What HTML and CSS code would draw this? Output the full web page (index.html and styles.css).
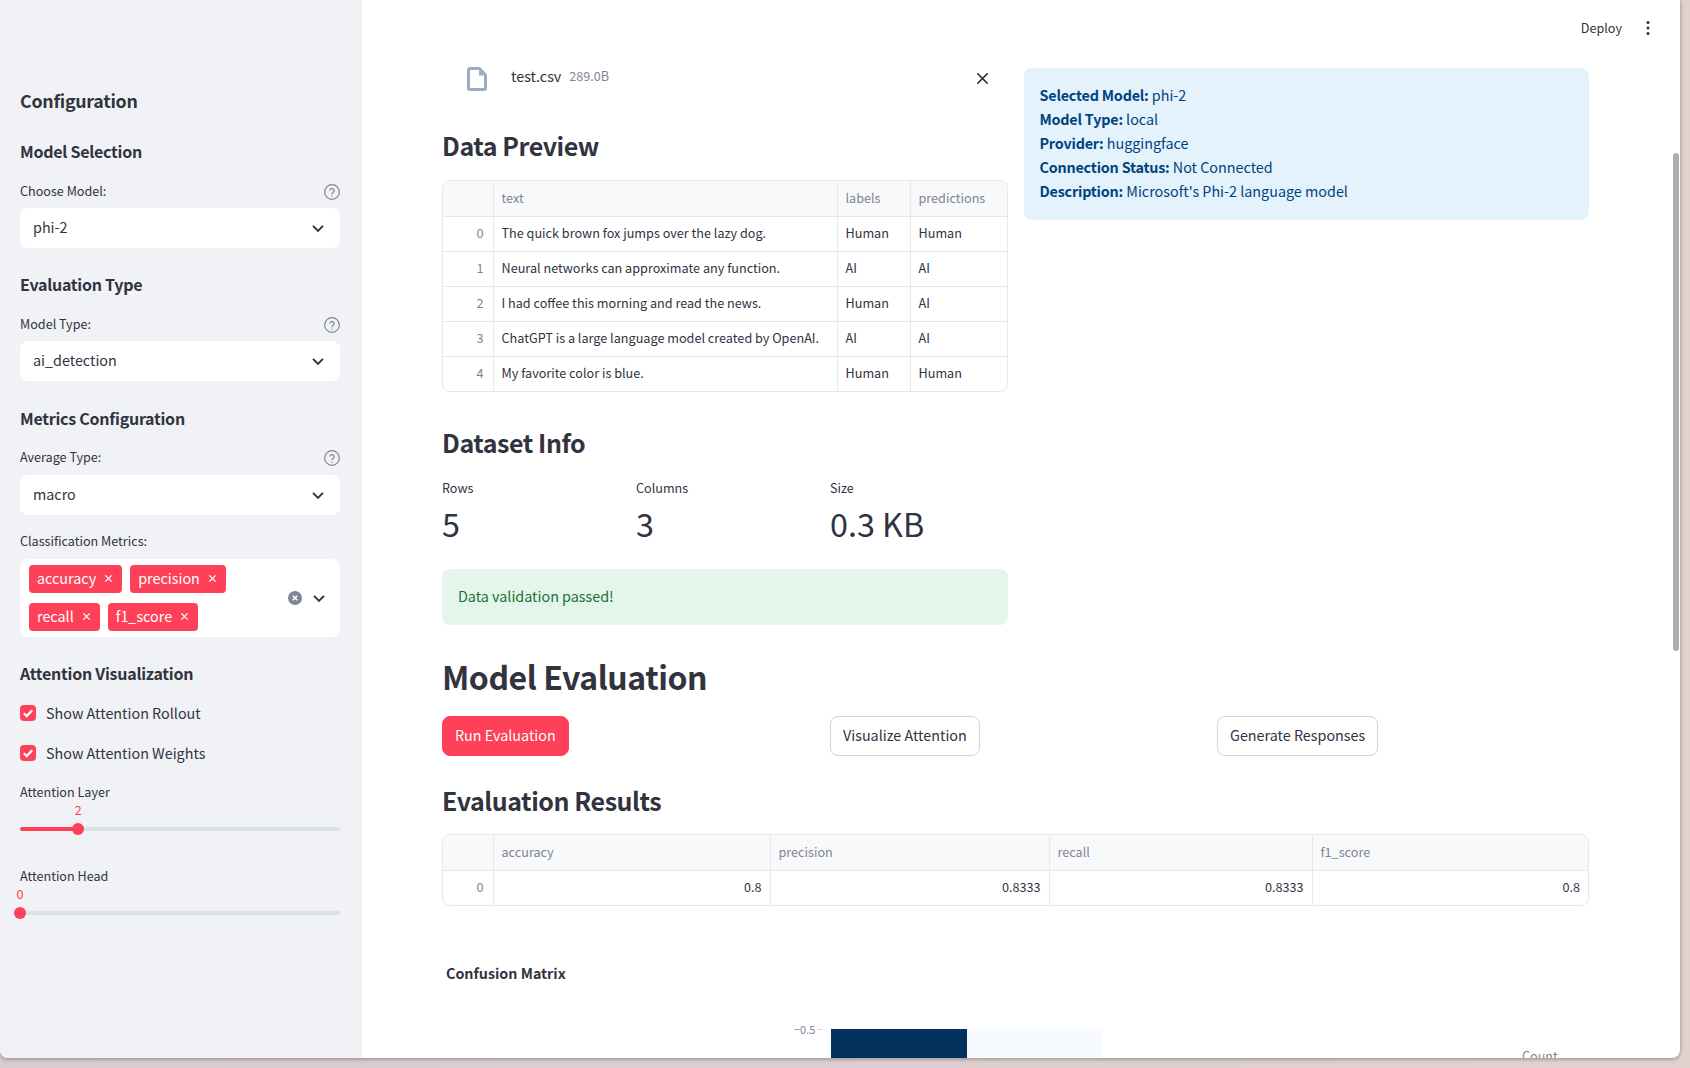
FILE: index.html
```html
<!DOCTYPE html>
<html lang="en">
<head>
    <meta charset="UTF-8">
    <meta name="viewport" content="width=device-width, initial-scale=1.0">
    <title>Model Evaluation</title>
    <link rel="stylesheet" href="styles.css">
</head>
<body>
    <div class="window">
        <aside class="sidebar">
            <h2 class="side-title">Configuration</h2>

            <h3 class="side-head first">Model Selection</h3>
            <div class="field-label"><span>Choose Model:</span>
                <svg class="help" viewBox="0 0 24 24"><circle cx="12" cy="12" r="11"/><path d="M8.800 9.200a3.300 3.300 0 0 1 6.400 1c0 2.200-3.200 2.700-3.200 4.600"/><path d="M12 18.200v.1"/></svg>
            </div>
            <div class="select"><span>phi-2</span>
                <svg class="chevron" viewBox="0 0 24 24"><path d="M6 9.500l6 6 6-6"/></svg>
            </div>

            <h3 class="side-head">Evaluation Type</h3>
            <div class="field-label"><span>Model Type:</span>
                <svg class="help" viewBox="0 0 24 24"><circle cx="12" cy="12" r="11"/><path d="M8.800 9.200a3.300 3.300 0 0 1 6.400 1c0 2.200-3.200 2.700-3.200 4.600"/><path d="M12 18.200v.1"/></svg>
            </div>
            <div class="select"><span>ai_detection</span>
                <svg class="chevron" viewBox="0 0 24 24"><path d="M6 9.500l6 6 6-6"/></svg>
            </div>

            <h3 class="side-head">Metrics Configuration</h3>
            <div class="field-label"><span>Average Type:</span>
                <svg class="help" viewBox="0 0 24 24"><circle cx="12" cy="12" r="11"/><path d="M8.800 9.200a3.300 3.300 0 0 1 6.400 1c0 2.200-3.200 2.700-3.200 4.600"/><path d="M12 18.200v.1"/></svg>
            </div>
            <div class="select"><span>macro</span>
                <svg class="chevron" viewBox="0 0 24 24"><path d="M6 9.500l6 6 6-6"/></svg>
            </div>

            <div class="field-label"><span>Classification Metrics:</span></div>
            <div class="multi">
                <div class="tags">
                    <span class="tag">accuracy <svg viewBox="0 0 10 10"><path d="M1.500 1.500l7 7M8.500 1.500l-7 7"/></svg></span>
                    <span class="tag">precision <svg viewBox="0 0 10 10"><path d="M1.500 1.500l7 7M8.500 1.500l-7 7"/></svg></span>
                    <span class="tag">recall <svg viewBox="0 0 10 10"><path d="M1.500 1.500l7 7M8.500 1.500l-7 7"/></svg></span>
                    <span class="tag">f1_score <svg viewBox="0 0 10 10"><path d="M1.500 1.500l7 7M8.500 1.500l-7 7"/></svg></span>
                </div>
                <svg class="clear" viewBox="0 0 14 14"><circle cx="7" cy="7" r="7"/><path d="M4.700 4.700l4.600 4.600M9.300 4.700l-4.600 4.600"/></svg>
                <svg class="chevron" viewBox="0 0 24 24"><path d="M6 9.500l6 6 6-6"/></svg>
            </div>

            <h3 class="side-head">Attention Visualization</h3>
            <label class="check first">
                <svg viewBox="0 0 16 16"><rect width="16" height="16" rx="4"/><path d="M3.800 8.200l2.900 2.900 5.500-5.800"/></svg>
                Show Attention Rollout
            </label>
            <label class="check">
                <svg viewBox="0 0 16 16"><rect width="16" height="16" rx="4"/><path d="M3.800 8.200l2.900 2.900 5.500-5.800"/></svg>
                Show Attention Weights
            </label>

            <div class="field-label slider-label"><span>Attention Layer</span></div>
            <div class="slider">
                <div class="track">
                    <div class="fill" style="width: 18.18%"></div>
                    <span class="slider-value" style="left: 18.18%">2</span>
                    <span class="thumb" style="left: 18.18%"></span>
                </div>
            </div>

            <div class="field-label"><span>Attention Head</span></div>
            <div class="slider">
                <div class="track">
                    <div class="fill" style="width: 0%"></div>
                    <span class="slider-value" style="left: 0%">0</span>
                    <span class="thumb" style="left: 0%"></span>
                </div>
            </div>
        </aside>

        <main class="main">
            <div class="toolbar">
                <span>Deploy</span>
                <svg viewBox="0 0 4 16"><circle cx="2" cy="2.500" r="1.500"/><circle cx="2" cy="8" r="1.500"/><circle cx="2" cy="13.500" r="1.500"/></svg>
            </div>
            <div class="scrollbar"></div>

            <div class="top-row">
                <div class="left-col">
                    <div class="file-row">
                        <svg class="file-icon" viewBox="0 0 20 24"><path d="M3 1.500h9.500l6 6.500v13a1.500 1.500 0 0 1-1.500 1.500H3A1.500 1.500 0 0 1 1.500 21V3A1.500 1.500 0 0 1 3 1.500z"/><path class="file-fold" d="M12 3v5.500h5.500z"/></svg>
                        <span class="file-name">test.csv</span>
                        <span class="file-size">289.0B</span>
                        <svg class="file-close" viewBox="0 0 14 14"><path d="M1.500 1.500l11 11M12.500 1.500l-11 11"/></svg>
                    </div>

                    <h2 class="heading preview-head">Data Preview</h2>
                    <div class="table-wrap">
                        <table class="grid">
                            <colgroup><col class="c-index"><col class="c-text"><col class="c-labels"><col></colgroup>
                            <tr><th></th><th>text</th><th>labels</th><th>predictions</th></tr>
                            <tr><td class="idx">0</td><td>The quick brown fox jumps over the lazy dog.</td><td>Human</td><td>Human</td></tr>
                            <tr><td class="idx">1</td><td>Neural networks can approximate any function.</td><td>AI</td><td>AI</td></tr>
                            <tr><td class="idx">2</td><td>I had coffee this morning and read the news.</td><td>Human</td><td>AI</td></tr>
                            <tr><td class="idx">3</td><td>ChatGPT is a large language model created by OpenAI.</td><td>AI</td><td>AI</td></tr>
                            <tr><td class="idx">4</td><td>My favorite color is blue.</td><td>Human</td><td>Human</td></tr>
                        </table>
                    </div>

                    <h2 class="heading info-head">Dataset Info</h2>
                    <div class="metrics">
                        <div class="metric"><div class="metric-label">Rows</div><div class="metric-value">5</div></div>
                        <div class="metric"><div class="metric-label">Columns</div><div class="metric-value">3</div></div>
                        <div class="metric"><div class="metric-label">Size</div><div class="metric-value">0.3 KB</div></div>
                    </div>
                    <div class="success">Data validation passed!</div>
                </div>

                <div class="info-box">
                    <p><b>Selected Model:</b> phi-2</p>
                    <p><b>Model Type:</b> local</p>
                    <p><b>Provider:</b> huggingface</p>
                    <p><b>Connection Status:</b> Not Connected</p>
                    <p><b>Description:</b> Microsoft's Phi-2 language model</p>
                </div>
            </div>

            <h1 class="page-head">Model Evaluation</h1>
            <div class="actions">
                <div class="action-cell"><button class="btn primary">Run Evaluation</button></div>
                <div class="action-cell"><button class="btn">Visualize Attention</button></div>
                <div class="action-cell"><button class="btn">Generate Responses</button></div>
            </div>

            <h2 class="heading results-head">Evaluation Results</h2>
            <div class="table-wrap results-table">
                <table class="grid numeric">
                    <colgroup><col class="c-index"><col class="c-acc"><col class="c-prec"><col class="c-rec"><col></colgroup>
                    <tr><th></th><th>accuracy</th><th>precision</th><th>recall</th><th>f1_score</th></tr>
                    <tr><td class="idx">0</td><td>0.8</td><td>0.8333</td><td>0.8333</td><td>0.8</td></tr>
                </table>
            </div>

            <div class="chart-title">Confusion Matrix</div>
            <svg class="chart" viewBox="0 0 1147 60">
                <text class="tick" x="352" y="14">−0.5</text>
                <path class="tick-line" d="M375 9.500h5"/>
                <rect class="cell-dark" x="389" y="9" width="136" height="51"/>
                <rect class="cell-light" x="525" y="9" width="134" height="51"/>
                <text class="legend" x="1080" y="41">Count</text>
            </svg>
        </main>
    </div>
</body>
</html>
```

FILE: styles.css
```css
* {
    box-sizing: border-box;
}

body {
    margin: 0;
    height: 1068px;
    overflow: hidden;
    font-family: "Noto Sans CJK SC", "Noto Sans", sans-serif;
    color: #31333f;
    background: linear-gradient(90deg, #d8ccd2 0%, #e2d1cf 100%);
}

.window {
    display: flex;
    width: 1680px;
    height: 1058px;
    overflow: hidden;
    background-color: #fff;
    border-radius: 0 0 8px 8px;
    box-shadow: 0 1px 4px rgba(0, 0, 0, 0.35);
}

/* sidebar */
.sidebar {
    flex: 0 0 362px;
    padding: 87px 22px 0 20px;
    background-color: #f0f2f6;
}

.side-title {
    margin: 0;
    padding-bottom: 2px;
    font-size: 17.800px;
    line-height: 26px;
    letter-spacing: -0.26px;
    font-weight: 600;
}

.side-head {
    margin: 25.500px 0 0;
    padding-bottom: 2px;
    font-size: 16px;
    line-height: 22px;
    letter-spacing: -0.25px;
    font-weight: 600;
}

.side-head.first {
    margin-top: 25px;
}

.field-label {
    display: flex;
    justify-content: space-between;
    align-items: center;
    height: 20px;
    margin-top: 16.500px;
    font-size: 12.600px;
    line-height: 20px;
}

.help {
    width: 16px;
    height: 16px;
    margin-top: 2px;
    fill: none;
    stroke: #808495;
    stroke-width: 1.800;
    stroke-linecap: round;
}

.select {
    display: flex;
    justify-content: space-between;
    align-items: center;
    height: 40px;
    margin-top: 7.400px;
    padding: 0 13px;
    font-size: 14.350px;
    background-color: #fff;
    border-radius: 8px;
}

.select span {
    padding-bottom: 3px;
}

.chevron {
    flex: none;
    width: 20px;
    height: 20px;
    margin-right: -1px;
    fill: none;
    stroke: #31333f;
    stroke-width: 2.400;
}

.multi {
    display: flex;
    align-items: center;
    height: 78px;
    margin-top: 7.700px;
    padding: 0 12px 0 9px;
    background-color: #fff;
    border-radius: 8px;
}

.tags {
    display: flex;
    flex-wrap: wrap;
    flex: 1;
    gap: 10px 8px;
}

.tag {
    display: flex;
    align-items: center;
    gap: 8px;
    height: 28px;
    padding: 0 9px 3px 8px;
    font-size: 14.350px;
    color: #fff;
    background-color: #ff4058;
    border-radius: 4px;
}

.tag svg {
    width: 9px;
    height: 9px;
    margin-top: 3px;
    fill: none;
    stroke: #fff;
    stroke-width: 1.400;
}

.clear {
    flex: none;
    width: 14px;
    height: 14px;
    margin-right: 7px;
    fill: #808495;
    stroke: #fff;
    stroke-width: 1.600;
}

.clear circle {
    stroke: none;
}

.check {
    display: flex;
    align-items: center;
    gap: 10px;
    height: 24px;
    margin-top: 16px;
    padding-bottom: 2px;
    font-size: 14.350px;
}

.check.first {
    margin-top: 15px;
}

.check svg {
    flex: none;
    width: 16px;
    height: 16px;
    margin-top: 2px;
}

.check rect {
    fill: #ff4058;
}

.check path {
    fill: none;
    stroke: #fff;
    stroke-width: 2.300;
}

.slider-label {
    margin-top: 17px;
}

.slider {
    height: 47.500px;
    padding-top: 25px;
}

.track {
    position: relative;
    height: 4px;
    background-color: #dbe1e9;
    border-radius: 2px;
}

.fill {
    height: 4px;
    background-color: #ff4058;
    border-radius: 2px;
}

.thumb {
    position: absolute;
    top: -4px;
    width: 12px;
    height: 12px;
    margin-left: -6px;
    background-color: #ff4058;
    border-radius: 50%;
}

.slider-value {
    position: absolute;
    top: -27px;
    width: 20px;
    margin-left: -10px;
    font-size: 12.600px;
    line-height: 20px;
    text-align: center;
    color: #ff4058;
}

/* main area */
.main {
    position: relative;
    flex: 1;
    min-width: 0;
    padding: 60px 91px 0 80px;
    overflow: hidden;
}

.toolbar {
    position: absolute;
    top: 18px;
    right: 30px;
    display: flex;
    align-items: center;
    gap: 24px;
    font-size: 12.600px;
    line-height: 20px;
}

.toolbar svg {
    width: 4px;
    height: 16px;
    fill: #31333f;
}

.scrollbar {
    position: absolute;
    top: 153px;
    right: 1px;
    width: 6px;
    height: 498px;
    background-color: #adadb2;
    border-radius: 3px;
}

.top-row {
    display: flex;
    gap: 16px;
    align-items: flex-start;
}

.left-col {
    flex: 0 0 566px;
    min-width: 0;
}

.file-row {
    display: flex;
    align-items: flex-start;
    height: 40px;
    padding: 7px 0 0 25px;
}

.file-icon {
    width: 20px;
    height: 24px;
    fill: none;
    stroke: #9aabc6;
    stroke-width: 3;
    stroke-linejoin: round;
}

.file-fold {
    fill: #9aabc6;
    stroke: none;
}

.file-name {
    margin-left: 24px;
    font-size: 14.350px;
    line-height: 18px;
}

.file-size {
    margin-left: 8px;
    font-size: 12.600px;
    line-height: 18px;
    color: #808495;
}

.file-close {
    width: 13px;
    height: 13px;
    margin: 5px 19px 0 auto;
    fill: none;
    stroke: #31333f;
    stroke-width: 1.600;
}

.heading {
    margin: 0;
    font-size: 25px;
    line-height: 40px;
    letter-spacing: -0.45px;
    font-weight: 600;
}

.preview-head {
    margin-top: 27px;
    padding-bottom: 4px;
    line-height: 36px;
}

.info-head {
    margin-top: 30px;
}

.results-head {
    margin-top: 24px;
}

.table-wrap {
    margin-top: 13px;
    overflow: hidden;
    border: 1px solid #e6e8ec;
    border-radius: 8px;
}

.results-table {
    margin-top: 14px;
}

.grid {
    width: 100%;
    table-layout: fixed;
    border-collapse: collapse;
    font-size: 12.650px;
}

.grid th,
.grid td {
    height: 35px;
    padding: 0 8px 2px;
    overflow: hidden;
    white-space: nowrap;
    border-right: 1px solid #e6e8ec;
    border-bottom: 1px solid #e6e8ec;
}

.grid th {
    text-align: left;
    font-weight: 400;
    color: #808495;
    background-color: #f8f9fb;
}

.grid tr > :last-child {
    border-right: none;
}

.grid tr:last-child td {
    border-bottom: none;
}

.grid td.idx {
    padding-right: 9px;
    text-align: right;
    color: #808495;
}

.numeric td {
    text-align: right;
}

.c-index {
    width: 50px;
}

.c-text {
    width: 344px;
}

.c-labels {
    width: 73px;
}

.c-acc {
    width: 277px;
}

.c-prec {
    width: 279px;
}

.c-rec {
    width: 263px;
}

.metrics {
    display: grid;
    grid-template-columns: 194px 194px 1fr;
    margin-top: 16px;
}

.metric-label {
    font-size: 12.600px;
    line-height: 20px;
}

.metric-value {
    margin-top: 2px;
    font-size: 32.300px;
    line-height: 46px;
}

.success {
    height: 56px;
    margin-top: 23px;
    padding: 0 16px;
    font-size: 14.350px;
    line-height: 54px;
    color: #177233;
    background-color: #e4f6ec;
    border-radius: 8px;
}

.info-box {
    flex: 1;
    margin-top: 8px;
    padding: 15px 16px 17px 15.500px;
    font-size: 14.350px;
    line-height: 24px;
    color: #004280;
    background-color: #e3f2fb;
    border-radius: 8px;
}

.info-box p {
    margin: 0;
}

.info-box b {
    font-weight: 600;
    letter-spacing: -0.2px;
}

.page-head {
    margin: 26px 0 0;
    font-size: 32px;
    line-height: 50px;
    letter-spacing: -0.45px;
    font-weight: 600;
}

.actions {
    display: grid;
    grid-template-columns: 388px 387px 1fr;
    margin-top: 15px;
}

.btn {
    height: 40px;
    padding: 0 12px 3px;
    font-family: inherit;
    font-size: 14.350px;
    color: #31333f;
    background-color: #fff;
    border: 1px solid #d5d6d9;
    border-radius: 8px;
    cursor: pointer;
}

.btn.primary {
    color: #fff;
    background-color: #ff4058;
    border-color: #ff4058;
}

.chart-title {
    margin: 55px 0 0 4px;
    font-size: 14.300px;
    line-height: 24px;
    font-weight: 600;
}

.chart {
    display: block;
    width: 1147px;
    height: 60px;
    margin-top: 35px;
}

.tick {
    font-size: 11px;
    fill: #808495;
}

.tick-line {
    stroke: #d5d6d9;
    fill: none;
}

.cell-dark {
    fill: #03325f;
}

.cell-light {
    fill: #f7fbff;
}

.legend {
    font-size: 12.600px;
    fill: #808495;
}
```
